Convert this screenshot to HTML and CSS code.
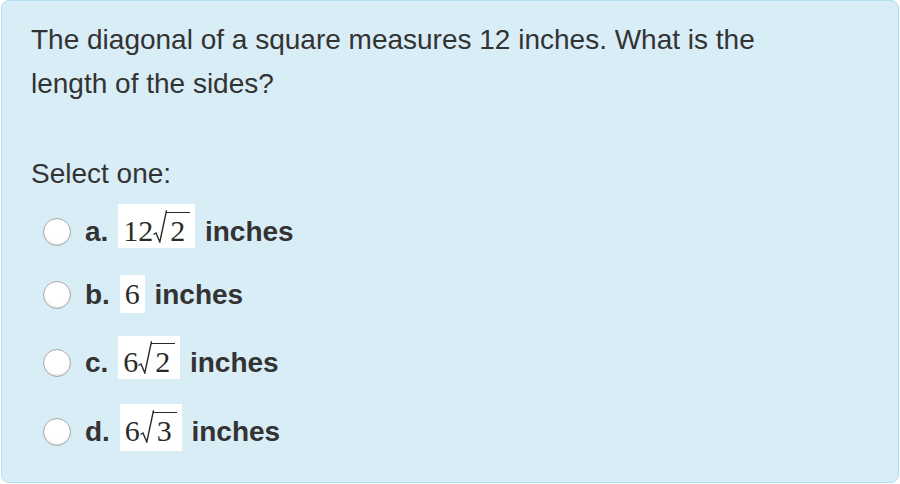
FILE: index.html
```html
<!DOCTYPE html>
<html>
<head>
<meta charset="utf-8">
<link rel="stylesheet" href="styles.css">
</head>
<body>
<div class="que">
  <div class="qtext">The diagonal of a square measures 12 inches. What is the length of the sides?</div>
  <div class="prompt">Select one:</div>
  <div class="answer">
    <div class="opt"><span class="radio"></span><span class="lbl">a. <span class="math m-a">12<svg class="rad-sign" viewBox="0 0 14 33" width="14" height="33"><path d="M0.5 24.5 L3 23 L6.8 32 L13.4 1 L14 1"/></svg><span class="rad">2</span></span> inches</span></div>
    <div class="opt"><span class="radio"></span><span class="lbl">b. <span class="math m-b">6</span> inches</span></div>
    <div class="opt"><span class="radio"></span><span class="lbl">c. <span class="math m-c">6<svg class="rad-sign" viewBox="0 0 14 33" width="14" height="33"><path d="M0.5 24.5 L3 23 L6.8 32 L13.4 1 L14 1"/></svg><span class="rad">2</span></span> inches</span></div>
    <div class="opt"><span class="radio"></span><span class="lbl">d. <span class="math m-d">6<svg class="rad-sign" viewBox="0 0 14 33" width="14" height="33"><path d="M0.5 24.5 L3 23 L6.8 32 L13.4 1 L14 1"/></svg><span class="rad">3</span></span> inches</span></div>
  </div>
</div>
</body>
</html>
```
FILE: styles.css
```css
html, body {
  margin: 0;
  padding: 0;
  background: #ffffff;
}
body {
  font-family: "Liberation Sans", Arial, sans-serif;
  color: #333333;
}
.que {
  box-sizing: border-box;
  margin: 0 0 0 1px;
  width: 898px;
  height: 483px;
  background: #d9edf7;
  border: 1px solid #b0e0ed;
  border-radius: 8px;
  padding: 17px 20px 0 29px;
}
.qtext {
  font-size: 28px;
  line-height: 44px;
  width: 740px;
}
.prompt {
  font-size: 28px;
  line-height: 44px;
  margin-top: 46px;
}
.answer {
  margin-top: 8px;
  padding-left: 12px;
}
.opt {
  font-size: 28px;
  line-height: 44px;
  font-weight: bold;
  margin-bottom: 19px;
  white-space: nowrap;
}
.radio {
  display: inline-block;
  box-sizing: border-box;
  width: 28px;
  height: 28px;
  border-radius: 50%;
  border: 1px solid #a9a9a9;
  background: radial-gradient(circle at 50% 40%, #ffffff 55%, #ececec 100%);
  box-shadow: inset 0 -1px 1px rgba(0,0,0,0.08);
  vertical-align: -5px;
  margin-right: 14px;
}
.lbl {
  color: #333333;
}
.math {
  display: inline-block;
  background: #ffffff;
  font-family: "Liberation Serif", "Times New Roman", serif;
  font-weight: normal;
  font-size: 30px;
  line-height: 30px;
  color: #2a2a2a;
  padding: 0 5px;
  margin: 0 2px;
}
.rad-sign {
  vertical-align: -2px;
  fill: none;
  stroke: #2a2a2a;
  stroke-width: 1.4;
  stroke-linejoin: miter;
}
.rad {
  display: inline-block;
  border-top: 1.5px solid #2a2a2a;
  line-height: 28px;
  padding: 4px 5px 0 4px;
  margin-left: -1px;
}
.m-a { padding-top: 6px; padding-bottom: 2px; }
.m-b { padding-top: 4px; padding-bottom: 4px; }
.m-c { padding-top: 5px; padding-bottom: 2px; }
.m-d { padding-top: 6px; padding-bottom: 5px; }
```
